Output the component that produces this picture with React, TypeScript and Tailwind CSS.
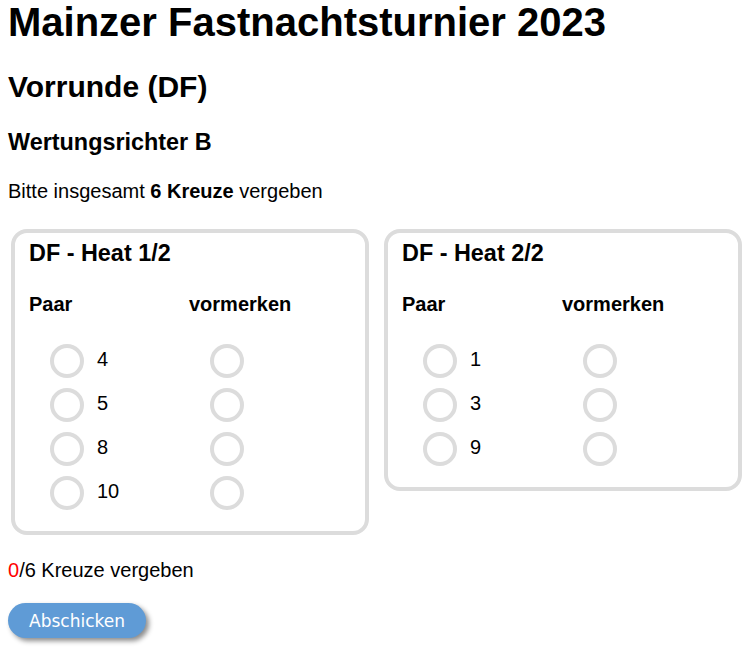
import React from "react";

type Heat = { title: string; pairs: number[] };

const heats: Heat[] = [
  { title: "DF - Heat 1/2", pairs: [4, 5, 8, 10] },
  { title: "DF - Heat 2/2", pairs: [1, 3, 9] },
];

function Radio() {
  return (
    <input
      type="radio"
      className="appearance-none m-0 w-[34px] h-[34px] rounded-full border-4 border-[#dcdcdc] bg-white shrink-0"
    />
  );
}

function HeatCard({ heat }: { heat: Heat }) {
  return (
    <div className="flex-1 self-start border-4 border-[#dcdcdc] rounded-[16px] pl-[14px] pt-[7px] pb-[16px]">
      <h3 className="text-[23.4px] font-bold leading-[27px]">{heat.title}</h3>
      <div className="flex mt-[26px] text-[20px] font-bold leading-[23px]">
        <div className="w-[160px]">Paar</div>
        <div>vormerken</div>
      </div>
      <div className="mt-[23px]">
        {heat.pairs.map((p) => (
          <div key={p} className="flex h-[44px] items-center">
            <div className="w-[160px] pl-[21px] flex items-center">
              <Radio />
              <span className="ml-[13px] text-[20px] leading-[23px] -mt-[2px]">{p}</span>
            </div>
            <div className="pl-[21px] flex items-center">
              <Radio />
            </div>
          </div>
        ))}
      </div>
    </div>
  );
}

export default function App() {
  return (
    <div className="bg-white text-black font-['Liberation_Sans',Arial,sans-serif] px-2 min-h-[651px]">
      <h1 className="text-[40px] font-bold leading-[46px] -mt-[1px]">Mainzer Fastnachtsturnier 2023</h1>
      <h2 className="text-[30px] font-bold leading-[34.5px] mt-[25px]">Vorrunde (DF)</h2>
      <h3 className="text-[23.4px] font-bold leading-[27px] mt-[24px]">Wertungsrichter B</h3>
      <p className="text-[20px] leading-[23px] mt-[24px]">
        Bitte insgesamt <b>6 Kreuze</b> vergeben
      </p>
      <div className="flex gap-[15px] pl-[3px] mt-[26px]">
        {heats.map((h) => (
          <HeatCard key={h.title} heat={h} />
        ))}
      </div>
      <p className="text-[20px] leading-[23px] mt-[24px]">
        <span className="text-[#ff0000]">0</span>/6 Kreuze vergeben
      </p>
      <button
        type="button"
        className="mt-[21px] h-[35px] w-[138px] pt-[4px] rounded-full bg-[#5f9bd6] text-white text-[17px] font-['DejaVu_Sans','Noto_Sans',sans-serif] shadow-[3px_3px_5px_rgba(0,0,0,0.45)] flex items-center justify-center"
      >
        Abschicken
      </button>
    </div>
  );
}
